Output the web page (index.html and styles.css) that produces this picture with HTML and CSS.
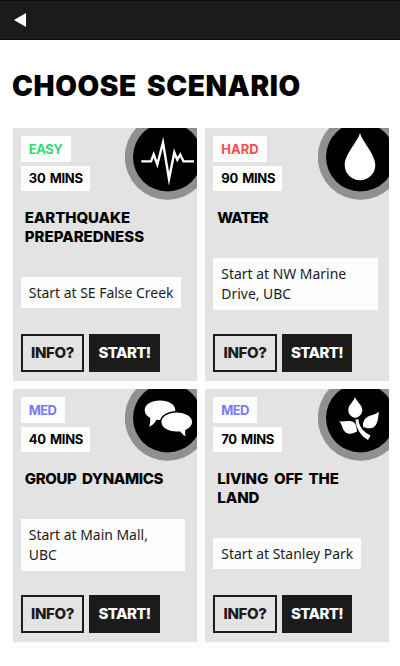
FILE: index.html
```html
<!DOCTYPE html>
<html lang="en">
<head>
<meta charset="utf-8">
<title>Choose scenario</title>
<link rel="stylesheet" href="styles.css">
</head>
<body>
<header class="bar"><svg class="back" viewBox="0 0 12 14"><path d="M0 7 12 0V14Z"/></svg></header>
<main>
<h1>CHOOSE SCENARIO</h1>
<section class="grid">
<article class="card">
<svg class="badge" viewBox="0 0 72 73"><circle class="ring" cx="42.5" cy="29" r="42.7"/><circle cx="42.5" cy="29" r="34.5"/><path class="pulse" d="M16.3 33.4H26L28.7 26.5 32.3 36.5 38 14.5 44 51 49.3 24.5 52.3 31.8 55.3 26.5 58.5 33.4H69"/></svg>
<div class="tag easy">EASY</div><div class="tag time">30 MINS</div>
<h2>EARTHQUAKE<br><span class="wide">PREPAREDNESS</span></h2>
<p class="place">Start at SE False Creek</p>
<div class="actions"><button class="info">INFO?</button><button class="start">START!</button></div>
</article>
<article class="card">
<svg class="badge" viewBox="0 0 72 73"><circle class="ring" cx="42.5" cy="29" r="42.7"/><circle cx="42.5" cy="29" r="34.5"/><path class="glyph" d="M42 4.5C43.5 13 57.3 26 57.3 37A15.3 15.3 0 0 1 26.7 37C26.7 26 40.5 13 42 4.5Z"/></svg>
<div class="tag hard">HARD</div><div class="tag time">90 MINS</div>
<h2><span class="tight">WATER</span></h2>
<p class="place double">Start at NW Marine<br>Drive, UBC</p>
<div class="actions"><button class="info">INFO?</button><button class="start">START!</button></div>
</article>
<article class="card">
<svg class="badge" viewBox="0 0 72 73"><circle class="ring" cx="42.5" cy="29" r="42.7"/><circle cx="42.5" cy="29" r="34.5"/><path class="glyph" d="M35 11.6C43.5 11.6 50.3 15.7 50.3 21S43.5 31 35 31L31.5 30.8C29.5 34.5 27 36.7 24 37.7 25.3 34.5 25.5 31.5 25 28.7 21.5 27 19.7 24.3 19.7 21 19.7 15.7 26.5 11.6 35 11.6Z"/><path class="glyph outlined" d="M51.7 22.7C60.5 22.7 67.8 27.3 67.8 33 67.8 36.5 65.5 39.5 61 41.5 60.5 44 60.8 46.5 62 48.8 58.5 47.5 56.3 45.5 54.8 43.2 44 44.3 35.7 39.5 35.7 33 35.7 27.3 43 22.7 51.7 22.7Z"/></svg>
<div class="tag med">MED</div><div class="tag time">40 MINS</div>
<h2><span class="dynamics">GROUP DYNAMICS</span></h2>
<p class="place double">Start at Main Mall,<br>UBC</p>
<div class="actions"><button class="info">INFO?</button><button class="start">START!</button></div>
</article>
<article class="card">
<svg class="badge" viewBox="0 0 72 73"><circle class="ring" cx="42.5" cy="29" r="42.7"/><circle cx="42.5" cy="29" r="34.5"/><path class="glyph" d="M37 7.7C38 12.5 44.3 15.5 44.3 21 44.3 25.5 41 27.8 37.3 29 33.5 27.8 30.3 25.5 30.3 21 30.3 15.5 36 12.5 37 7.7ZM61 22.7C60 28 60.5 38.7 52 39.3 49 39.5 47 38.5 45.3 38.3 45 36.5 44.7 34.5 46 31.5 48.5 26 56.5 26.5 61 22.7ZM21.3 32.3C26 33 33.5 30 37 34.5 38.5 36.5 38.5 39.5 39 42.5 36 44 34 45.2 30 44.5 24.5 43.5 24.5 35.5 21.3 32.3ZM37.5 30.5 40.5 30.3C41 38 45.5 43 52.5 46.5L50 51C43 47 38 40 37.5 30.5Z"/></svg>
<div class="tag med">MED</div><div class="tag time seventy">70 MINS</div>
<h2>LIVING OFF THE<br>LAND</h2>
<p class="place">Start at Stanley Park</p>
<div class="actions"><button class="info">INFO?</button><button class="start">START!</button></div>
</article>
</section>
</main>
</body>
</html>
```
FILE: styles.css
```css
* { box-sizing: border-box; }
body { margin: 0; background: #fff; color: #000; font-family: "Noto Sans", sans-serif; }
.bar { height: 40px; padding: 12px 14px; background: #1b1b1b; border-top: 1px solid #0b0b0b; border-bottom: 1px solid #0b0b0b; }
.back { display: block; width: 12px; height: 14px; fill: #fff; }
h1 { margin: 0; height: 88px; padding: 28px 0 0 12px; font: 900 28px/36px Inter, sans-serif; letter-spacing: .6px; word-spacing: 4px; white-space: nowrap; }
.grid { display: grid; grid-template-columns: 184.5px 184px; grid-auto-rows: 253px; gap: 8px; width: 376.5px; margin-left: 12.5px; padding-bottom: 8px; background: #fdfdfd; }
.card { position: relative; display: flex; flex-direction: column; align-items: flex-start; padding: 8px 8px 9.5px 8.3px; background: #e3e3e3; overflow: hidden; }
.badge { position: absolute; top: 0; right: 0; width: 72px; height: 73px; }
.card:nth-child(even) .badge { right: -1px; }
.ring { fill: #909090; }
.glyph { fill: #fff; }
.outlined { stroke: #000; stroke-width: 1.5; }
.pulse { fill: none; stroke: #fff; stroke-width: 2.4; stroke-miterlimit: 8; }
.tag { height: 26px; padding: 0 8px; background: #fdfdfd; font: 700 13px/27px Inter, sans-serif; white-space: nowrap; }
.time { width: 69px; height: 25px; margin-top: 4px; line-height: 25px; letter-spacing: -.3px; word-spacing: 1.5px; }
.seventy { width: 68.7px; }
.easy { width: 50px; color: #35d873; letter-spacing: -.5px; }
.hard { width: 54px; color: #ff4b4b; }
.med { width: 44px; color: #777aff; letter-spacing: -.6px; }
h2 { margin: 17px 0 0 4px; font: 800 15px/19px Inter, sans-serif; letter-spacing: -.08px; word-spacing: 2.5px; white-space: nowrap; }
.wide { letter-spacing: 0; }
.tight { letter-spacing: -.7px; }
.dynamics { letter-spacing: -.35px; }
.place { margin: auto 0 25.5px; height: 31px; padding: 5.5px 8px; background: #fdfdfd; color: #1b1b1b; font-size: 13.95px; line-height: 20.4px; white-space: nowrap; }
.double { width: 164.5px; height: 51.5px; margin-bottom: 24px; }
.actions { display: flex; gap: 5px; }
button { height: 38px; padding: 0; border: 2px solid #1b1b1b; font: 800 15px/34px Inter, sans-serif; letter-spacing: -.6px; }
.info { width: 63.5px; background: transparent; color: #1b1b1b; letter-spacing: -.35px; }
.start { width: 70.5px; background: #1b1b1b; color: #fff; }
```
